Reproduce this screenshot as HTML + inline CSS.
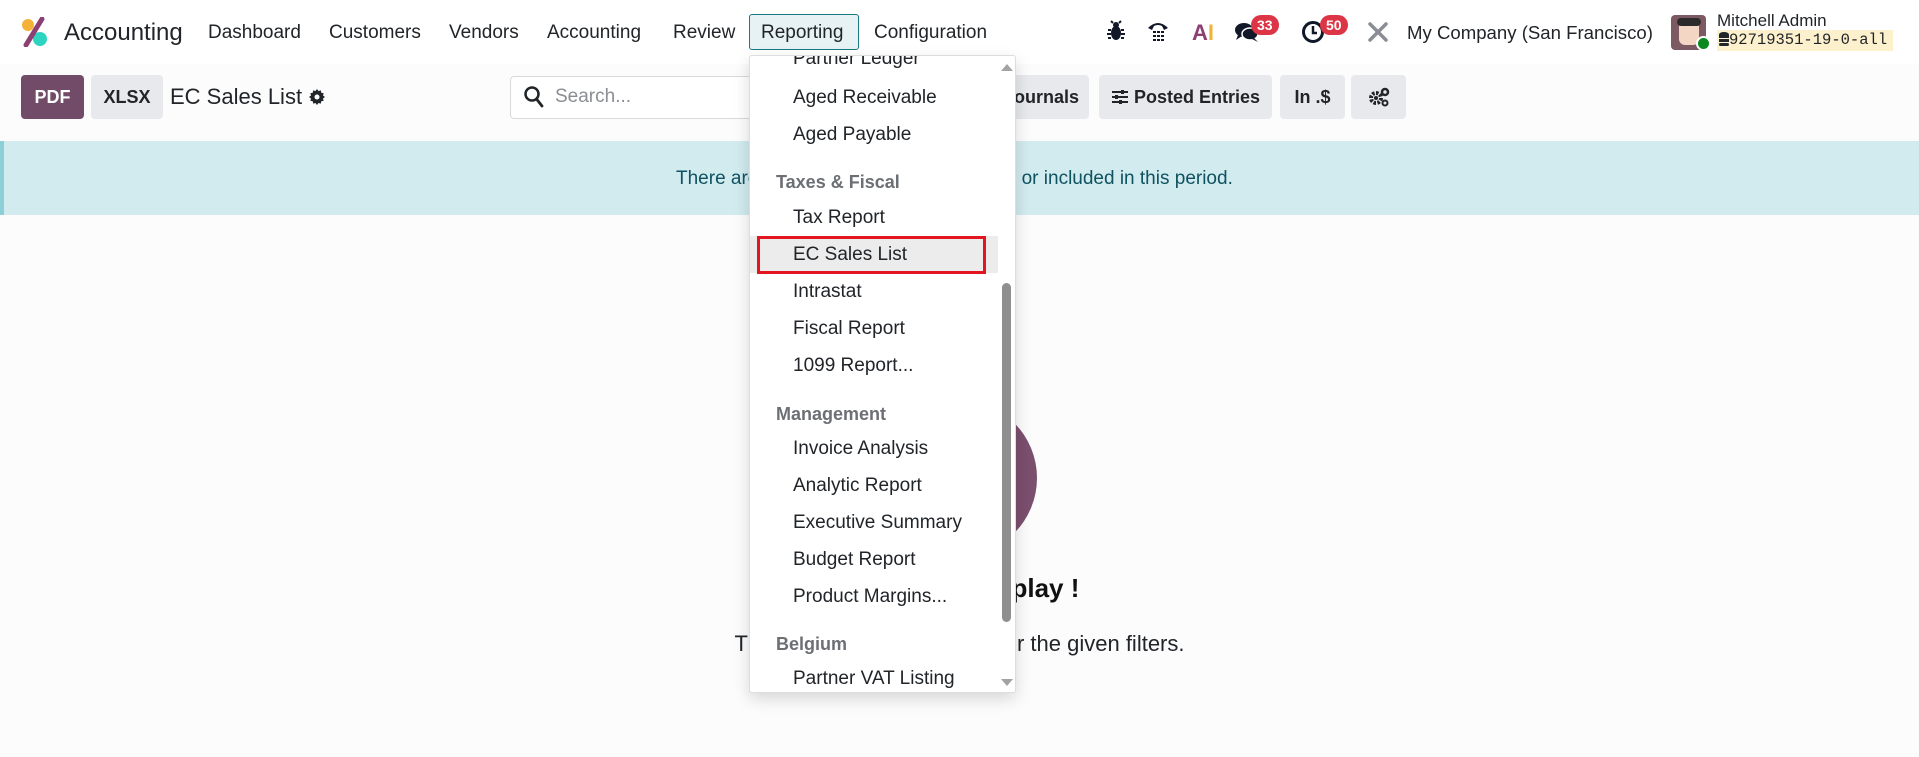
<!DOCTYPE html>
<html><head><meta charset="utf-8"><style>
*{box-sizing:border-box;margin:0;padding:0}
body{width:1919px;height:757px;overflow:hidden;background:#fcfcfc;font-family:"Liberation Sans",sans-serif;color:#1f2328;position:relative}
.a{position:absolute;white-space:nowrap}
.nav{position:absolute;left:0;top:0;width:1919px;height:64px;background:#fff}
.m{position:absolute;top:22px;font-size:19px;color:#212529}
.btn{position:absolute;top:75px;height:44px;border-radius:4px;background:#e7e9ed;font-size:18px;font-weight:bold;color:#212529;display:flex;align-items:center;justify-content:center}
.dd{position:absolute;left:749px;top:55px;width:267px;height:638px;background:#fff;border:1px solid #ddd;box-shadow:0 6px 16px rgba(0,0,0,.15);overflow:hidden;border-radius:3px}
.it{position:absolute;left:43px;font-size:19px;color:#212529}
.hd{position:absolute;left:26px;font-size:18px;font-weight:bold;color:#6c6f74}
.badge{position:absolute;background:#dc3545;color:#fff;font-size:14px;font-weight:bold;border-radius:10px;height:20px;padding:0 6px;line-height:20px}
</style></head><body>
<div class="nav">
  <svg class="a" style="left:20px;top:17px" width="30" height="30" viewBox="0 0 30 30"><circle cx="8" cy="8" r="6" fill="#f4b338"/><circle cx="20" cy="22" r="7" fill="#2dd4bf"/><path d="M22 2 L6 28" stroke="#8c3f73" stroke-width="5" stroke-linecap="round"/></svg>
  <div class="a" style="left:64px;top:19px;font-size:24px;color:#212529">Accounting</div>
  <div class="m" style="left:208px">Dashboard</div>
  <div class="m" style="left:329px">Customers</div>
  <div class="m" style="left:449px">Vendors</div>
  <div class="m" style="left:547px">Accounting</div>
  <div class="m" style="left:673px">Review</div>
  <div class="a" style="left:749px;top:14px;width:110px;height:36px;border:1px solid #1b7a80;border-radius:3px;background:#e6f2f3"></div>
  <div class="m" style="left:761px">Reporting</div>
  <div class="m" style="left:874px">Configuration</div>
  <svg class="a" style="left:1107px;top:20px" width="18" height="22" viewBox="0 0 18 22"><ellipse cx="9" cy="13" rx="5" ry="7" fill="#111827"/><circle cx="9" cy="5" r="3" fill="#111827"/><path d="M4 10H1M4 14H0M4 18H1M14 10H17M14 14H18M14 18H17M6 3L4 1M12 3L14 1" stroke="#111827" stroke-width="2"/></svg>
  <svg class="a" style="left:1146px;top:20px" width="24" height="22" viewBox="0 0 24 22"><path d="M2 8 Q12 -2 22 8 L18 10 L16 6 Q12 4 8 6 L6 10Z" fill="#111827"/><g fill="#111827"><rect x="7" y="11" width="3" height="2"/><rect x="11" y="11" width="3" height="2"/><rect x="15" y="11" width="3" height="2"/><rect x="7" y="15" width="3" height="2"/><rect x="11" y="15" width="3" height="2"/><rect x="15" y="15" width="3" height="2"/><rect x="7" y="19" width="3" height="2"/><rect x="11" y="19" width="3" height="2"/><rect x="15" y="19" width="3" height="2"/></g></svg>
  <div class="a" style="left:1192px;top:20px;font-size:22px;font-weight:bold;color:#8c3f73">A<span style="color:#f4b338">I</span></div>
  <svg class="a" style="left:1234px;top:21px" width="26" height="22" viewBox="0 0 26 22"><ellipse cx="10" cy="9" rx="9" ry="7" fill="#111827"/><ellipse cx="16" cy="13" rx="8" ry="6" fill="#111827" stroke="#fff" stroke-width="1.5"/><path d="M4 14 L2 19 L8 15Z M20 17 L24 21 L18 18Z" fill="#111827"/></svg>
  <div class="badge" style="left:1251px;top:15px">33</div>
  <svg class="a" style="left:1301px;top:20px" width="24" height="24" viewBox="0 0 24 24"><circle cx="12" cy="12" r="9.5" fill="none" stroke="#111827" stroke-width="3"/><path d="M12 6V13H16" stroke="#111827" stroke-width="2.5" fill="none"/></svg>
  <div class="badge" style="left:1320px;top:15px">50</div>
  <svg class="a" style="left:1367px;top:21px" width="22" height="22" viewBox="0 0 22 22"><path d="M3 3L19 19M19 3L3 19" stroke="#8a8e94" stroke-width="3.5" stroke-linecap="round"/></svg>
  <div class="m" style="left:1407px;font-size:18.6px">My Company (San Francisco)</div>
  <div class="a" style="left:1671px;top:15px;width:35px;height:35px;border-radius:4px;background:#7d5a63"><div style="position:absolute;left:8px;top:6px;width:20px;height:24px;background:#f3d6c4;border-radius:6px"></div><div style="position:absolute;left:6px;top:3px;width:24px;height:8px;background:#2b2b2b;border-radius:4px"></div></div>
  <div class="a" style="left:1696px;top:36px;width:15px;height:15px;border-radius:50%;background:#0a8a1e;border:2px solid #fff"></div>
  <div class="a" style="left:1717px;top:11px;font-size:17px;color:#212529">Mitchell Admin</div>
  <div class="a" style="left:1717px;top:30px;width:176px;height:21px;background:#fdf0cc;font-family:'Liberation Mono',monospace;font-size:15.5px;line-height:21px;padding-left:2px"><svg width="10" height="14" viewBox="0 0 10 14" style="vertical-align:-2px"><ellipse cx="5" cy="2.5" rx="5" ry="2.5" fill="#212529"/><rect x="0" y="3" width="10" height="3" fill="#212529"/><rect x="0" y="7" width="10" height="3" fill="#212529"/><rect x="0" y="11" width="10" height="3" rx="1.5" fill="#212529"/></svg>92719351-19-0-all</div>
</div>

<div class="btn" style="left:21px;width:63px;background:#714b67;color:#fff">PDF</div>
<div class="btn" style="left:91px;width:72px">XLSX</div>
<div class="a" style="left:170px;top:84px;font-size:22px;color:#212529">EC Sales List</div>
<svg class="a" style="left:309px;top:89px" width="16" height="16" viewBox="0 0 16 16"><path d="M8 0l1.5 2 2.4-.6.3 2.4 2.4.3-.6 2.4L16 8l-2 1.5.6 2.4-2.4.3-.3 2.4-2.4-.6L8 16l-1.5-2-2.4.6-.3-2.4-2.4-.3.6-2.4L0 8l2-1.5-.6-2.4 2.4-.3.3-2.4 2.4.6z" fill="#212529"/><circle cx="8" cy="8" r="2.5" fill="#fff"/></svg>
<div class="a" style="left:510px;top:76px;width:300px;height:43px;border:1px solid #d8dadd;border-radius:4px;background:#fff"></div>
<svg class="a" style="left:524px;top:86px" width="20" height="22" viewBox="0 0 20 22"><circle cx="8" cy="8" r="6.5" fill="none" stroke="#212529" stroke-width="2.5"/><path d="M12.5 13L18 20" stroke="#212529" stroke-width="2.8" stroke-linecap="round"/></svg>
<div class="a" style="left:555px;top:86px;font-size:19px;color:#8a8e94">Search...</div>
<div class="btn" style="left:960px;width:129px;justify-content:flex-end;padding-right:10px">Journals</div>
<div class="btn" style="left:1099px;width:173px"><svg width="18" height="16" viewBox="0 0 18 16" style="margin-right:5px"><path d="M1 3H17M1 8H17M1 13H17" stroke="#212529" stroke-width="2"/><rect x="10" y="1" width="3" height="4" fill="#212529"/><rect x="4" y="6" width="3" height="4" fill="#212529"/><rect x="8" y="11" width="3" height="4" fill="#212529"/></svg>Posted Entries</div>
<div class="btn" style="left:1280px;width:65px">In .$</div>
<div class="btn" style="left:1351px;width:55px"><svg width="22" height="20" viewBox="0 0 22 20"><circle cx="8" cy="11" r="5" fill="none" stroke="#212529" stroke-width="4" stroke-dasharray="2.5 1.4"/><circle cx="8" cy="11" r="2" fill="#212529"/><circle cx="17" cy="5" r="3" fill="none" stroke="#212529" stroke-width="2.5"/><circle cx="17" cy="16" r="2.5" fill="none" stroke="#212529" stroke-width="2"/></svg></div>

<div class="a" style="left:0;top:141px;width:1919px;height:74px;background:#d1ebef;border-left:4px solid #8ccfd6"></div>
<div class="a" style="left:676px;top:168px;font-size:19px;color:#0f5260">There are</div>
<div class="a" style="left:1010px;top:168px;font-size:19px;color:#0f5260">r or included in this period.</div>

<div class="a" style="left:881px;top:400px;width:156px;height:156px;border-radius:50%;background:#7b4f6e"></div>
<div class="a" style="left:0;top:573px;width:1919px;text-align:center;font-size:26px;font-weight:bold;color:#111">No data to display !</div>
<div class="a" style="left:0;top:631px;width:1919px;text-align:center;font-size:22px;color:#212529">There is no data to display for the given filters.</div>

<div class="dd">
  <div class="it" style="top:-8px">Partner Ledger</div>
  <div class="it" style="top:31px">Aged Receivable</div>
  <div class="it" style="top:68px">Aged Payable</div>
  <div class="hd" style="top:116px">Taxes &amp; Fiscal</div>
  <div class="it" style="top:151px">Tax Report</div>
  <div style="position:absolute;left:0;top:180px;width:248px;height:37px;background:#ececec"></div>
  <div style="position:absolute;left:7px;top:180px;width:229px;height:38px;border:3px solid #e3161f"></div>
  <div class="it" style="top:188px">EC Sales List</div>
  <div class="it" style="top:225px">Intrastat</div>
  <div class="it" style="top:262px">Fiscal Report</div>
  <div class="it" style="top:299px">1099 Report...</div>
  <div class="hd" style="top:348px">Management</div>
  <div class="it" style="top:382px">Invoice Analysis</div>
  <div class="it" style="top:419px">Analytic Report</div>
  <div class="it" style="top:456px">Executive Summary</div>
  <div class="it" style="top:493px">Budget Report</div>
  <div class="it" style="top:530px">Product Margins...</div>
  <div class="hd" style="top:578px">Belgium</div>
  <div class="it" style="top:612px">Partner VAT Listing</div>
  <div style="position:absolute;left:252px;top:227px;width:9px;height:339px;border-radius:5px;background:#8f8f8f"></div>
  <div style="position:absolute;left:251px;top:8px;border-left:6px solid transparent;border-right:6px solid transparent;border-bottom:7px solid #a3a3a3"></div>
  <div style="position:absolute;left:251px;top:623px;border-left:6px solid transparent;border-right:6px solid transparent;border-top:7px solid #a3a3a3"></div>
</div>
</body></html>
